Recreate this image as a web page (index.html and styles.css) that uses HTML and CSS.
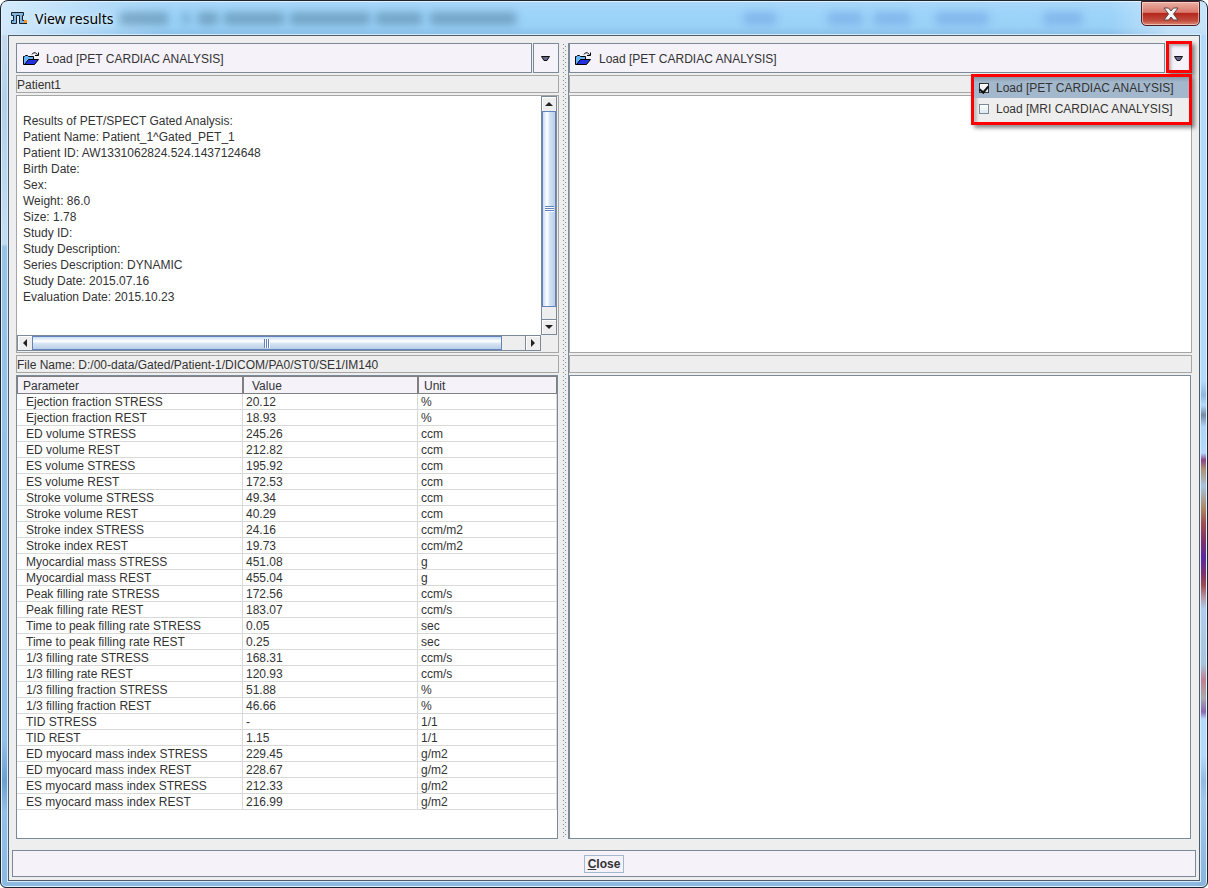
FILE: index.html
```html
<!DOCTYPE html>
<html lang="en">
<head>
<meta charset="utf-8">
<title>View results</title>
<link rel="stylesheet" href="styles.css">
</head>
<body>
<div class="window">
  <header class="titlebar">
    <svg class="app-icon" width="17" height="13" viewBox="0 0 17 13" aria-hidden="true"><path d="M.5.5h12v3h-1v5h2v3h-5v-8h-3v8h-5v-3h2v-5h-2z" fill="#7fb4dc" stroke="#14202c"/><path d="M13 11.500h3" stroke="#14202c"/><path d="M13 8h3v3h-3z" fill="#ff9320"/></svg>
    <h1 class="title">View results</h1>
    <div class="ghosts" aria-hidden="true">
      <i class="ghost g1"></i><i class="ghost g2"></i><i class="ghost g3"></i><i class="ghost g4"></i><i class="ghost g5"></i><i class="ghost g6"></i><i class="ghost g7"></i><i class="ghost b1"></i><i class="ghost b2"></i><i class="ghost b3"></i><i class="ghost b4"></i><i class="ghost b5"></i>
    </div>
    <button class="window-close" aria-label="Close window"><svg width="16" height="14" viewBox="0 0 16 14"><path d="M1 1h4.500L8 4l2.500-3H15l-4.500 6 4.500 6h-4.500L8 10l-2.500 3H1l4.500-6z" fill="#f4f4f4" stroke="#5c4548"/></svg></button>
  </header>
  <main class="client">
    <div class="panes">
      <section class="pane">
        <div class="toolbar">
          <button class="load"><svg width="17" height="14" viewBox="0 0 17 14" aria-hidden="true"><path d="M.5 12.500v-8h1l1-1h2l1 1h5v4h-5l-3 4z" fill="#64b4ff" stroke="#000"/><path d="M1.500 12.500l4-5h10l-4 5z" fill="#2430e0" stroke="#000"/><path d="M9 2.500 10.500.8h2l2 2M15.500.5v3H12" fill="none" stroke="#000"/></svg>Load [PET CARDIAC ANALYSIS]</button>
          <button class="drop" aria-label="Choose analysis"><svg width="10" height="6" viewBox="0 0 10 6"><path d="M.5.5h8L6 4.500H3z" fill="#66668c" stroke="#111"/></svg></button>
        </div>
        <div class="caption">Patient1</div>
        <div class="report">
          <div class="report-text">
            <p>Results of PET/SPECT Gated Analysis:</p>
            <p>Patient Name: Patient_1^Gated_PET_1</p>
            <p>Patient ID: AW1331062824.524.1437124648</p>
            <p>Birth Date:</p>
            <p>Sex:</p>
            <p>Weight: 86.0</p>
            <p>Size: 1.78</p>
            <p>Study ID:</p>
            <p>Study Description:</p>
            <p>Series Description: DYNAMIC</p>
            <p>Study Date: 2015.07.16</p>
            <p>Evaluation Date: 2015.10.23</p>
          </div>
          <div class="vbar">
            <button class="arrow" aria-label="Scroll up"><svg width="8" height="4"><path d="M4 0 8 4H0z" fill="#222"/></svg></button>
            <div class="thumb"><span class="grip"></span></div>
            <div class="track"></div>
            <button class="arrow" aria-label="Scroll down"><svg width="8" height="4"><path d="M0 0h8L4 4z" fill="#222"/></svg></button>
          </div>
          <div class="hbar">
            <button class="arrow" aria-label="Scroll left"><svg width="4" height="8"><path d="M4 0v8L0 4z" fill="#222"/></svg></button>
            <div class="thumb"><span class="grip"></span></div>
            <div class="track"></div>
            <button class="arrow" aria-label="Scroll right"><svg width="4" height="8"><path d="M0 0v8l4-4z" fill="#222"/></svg></button>
          </div>
        </div>
        <div class="caption">File Name: D:/00-data/Gated/Patient-1/DICOM/PA0/ST0/SE1/IM140</div>
        <div class="grid">
          <table class="results">
            <thead><tr><th class="c1">Parameter</th><th class="c2">Value</th><th class="c3">Unit</th></tr></thead>
            <tbody>
              <tr><td>Ejection fraction STRESS</td><td>20.12</td><td>%</td></tr>
              <tr><td>Ejection fraction REST</td><td>18.93</td><td>%</td></tr>
              <tr><td>ED volume STRESS</td><td>245.26</td><td>ccm</td></tr>
              <tr><td>ED volume REST</td><td>212.82</td><td>ccm</td></tr>
              <tr><td>ES volume STRESS</td><td>195.92</td><td>ccm</td></tr>
              <tr><td>ES volume REST</td><td>172.53</td><td>ccm</td></tr>
              <tr><td>Stroke volume STRESS</td><td>49.34</td><td>ccm</td></tr>
              <tr><td>Stroke volume REST</td><td>40.29</td><td>ccm</td></tr>
              <tr><td>Stroke index STRESS</td><td>24.16</td><td>ccm/m2</td></tr>
              <tr><td>Stroke index REST</td><td>19.73</td><td>ccm/m2</td></tr>
              <tr><td>Myocardial mass STRESS</td><td>451.08</td><td>g</td></tr>
              <tr><td>Myocardial mass REST</td><td>455.04</td><td>g</td></tr>
              <tr><td>Peak filling rate STRESS</td><td>172.56</td><td>ccm/s</td></tr>
              <tr><td>Peak filling rate REST</td><td>183.07</td><td>ccm/s</td></tr>
              <tr><td>Time to peak filling rate STRESS</td><td>0.05</td><td>sec</td></tr>
              <tr><td>Time to peak filling rate REST</td><td>0.25</td><td>sec</td></tr>
              <tr><td>1/3 filling rate STRESS</td><td>168.31</td><td>ccm/s</td></tr>
              <tr><td>1/3 filling rate REST</td><td>120.93</td><td>ccm/s</td></tr>
              <tr><td>1/3 filling fraction STRESS</td><td>51.88</td><td>%</td></tr>
              <tr><td>1/3 filling fraction REST</td><td>46.66</td><td>%</td></tr>
              <tr><td>TID STRESS</td><td>-</td><td>1/1</td></tr>
              <tr><td>TID REST</td><td>1.15</td><td>1/1</td></tr>
              <tr><td>ED myocard mass index STRESS</td><td>229.45</td><td>g/m2</td></tr>
              <tr><td>ED myocard mass index REST</td><td>228.67</td><td>g/m2</td></tr>
              <tr><td>ES myocard mass index STRESS</td><td>212.33</td><td>g/m2</td></tr>
              <tr><td>ES myocard mass index REST</td><td>216.99</td><td>g/m2</td></tr>
            </tbody>
          </table>
        </div>
      </section>
      <div class="splitter"></div>
      <section class="pane pane-right">
        <div class="toolbar">
          <button class="load"><svg width="17" height="14" viewBox="0 0 17 14" aria-hidden="true"><path d="M.5 12.500v-8h1l1-1h2l1 1h5v4h-5l-3 4z" fill="#64b4ff" stroke="#000"/><path d="M1.500 12.500l4-5h10l-4 5z" fill="#2430e0" stroke="#000"/><path d="M9 2.500 10.500.8h2l2 2M15.500.5v3H12" fill="none" stroke="#000"/></svg>Load [PET CARDIAC ANALYSIS]</button>
          <button class="drop drop-marked" aria-label="Choose analysis"><svg width="10" height="6" viewBox="0 0 10 6"><path d="M.5.5h8L6 4.500H3z" fill="#66668c" stroke="#111"/></svg></button>
          <div class="menu">
            <label class="item selected"><input type="checkbox" checked>Load [PET CARDIAC ANALYSIS]</label>
            <label class="item"><input type="checkbox">Load [MRI CARDIAC ANALYSIS]</label>
          </div>
        </div>
        <div class="caption"></div>
        <div class="report"></div>
        <div class="caption"></div>
        <div class="grid"></div>
      </section>
    </div>
    <footer class="bottom"><button class="close"><u>C</u>lose</button></footer>
  </main>
</div>
</body>
</html>
```
FILE: styles.css
```css
* { box-sizing: border-box; }
body { margin: 0; background: #fff; font: 12px/16px "Liberation Sans", Arial, sans-serif; color: #333; }
button { font: inherit; color: inherit; margin: 0; padding: 0; border: 0; border-radius: 0; background: none; }
svg { display: block; flex: none; }
p, h1 { margin: 0; }

.window {
  display: flex; flex-direction: column; min-height: 100vh; padding: 0 7px 6px; position: relative;
  border: 1px solid #1c2430; border-radius: 8px 8px 6px 6px; overflow: hidden;
  background:
    linear-gradient(#b5d9fb 0, #b5d9fb 380px, #8fb8dc 394px, #b5d9fb 404px, #748ca4 414px, #b0d4f6 426px, #b5d9fb 452px, #8b4585 459px, #b09070 468px, #a9c3da 485px, #ad8560 508px, #a04a50 523px, #80306a 541px, #5c28a0 557px, #80306a 573px, #a04a50 584px, #b89aa8 597px, #b0cdeb 608px, #a9c3da 663px, #c08090 679px, #aaaaaa 697px, #8a68b0 711px, #b5d9fb 718px, #b5d9fb 755px, #92bbe2 780px, #a2c8ec 800px, #8ab4dc 100%) right 0 / 8px 100% no-repeat,
    linear-gradient(#cfe0ee 0, #b4d0ea 100px, #c3dcf2 230px, #c3dcf2 243px, #98c2e6 246px, #94bfe6 740px, #6ba0d2 780px, #94bfe6 810px, #8db9e0) left 0 / 8px 100% no-repeat,
    #8db9e0;
  box-shadow: inset 0 0 0 1px #e0f2ff;
}
.titlebar {
  display: flex; align-items: center; height: 33px; margin: 1px -6px 0; padding-left: 9px; position: relative;
  background:
    linear-gradient(90deg, rgba(225,240,252,.8), rgba(190,224,248,.5) 9%, transparent 14%, transparent 92%, rgba(215,235,250,.7) 97%),
    linear-gradient(#a9d7fa, #9bd3f9 40%, #98d0f6 75%, #8bbfea);
}
.app-icon { position: relative; z-index: 1; }
.title { margin-left: 7px; font: 400 14px/18px "Noto Sans", sans-serif; color: #000; position: relative; z-index: 1; text-shadow: 0 0 6px #fff; }
.ghosts { position: absolute; inset: 0; overflow: hidden; }
.ghost { position: absolute; top: 10px; height: 13px; background: #4e7896; opacity: .5; filter: blur(4px); }
.g1 { left: 118px; width: 48px; }
.g2 { left: 180px; width: 8px; opacity: .35; }
.g3 { left: 196px; width: 20px; }
.g4 { left: 222px; width: 60px; }
.g5 { left: 288px; width: 80px; }
.g6 { left: 374px; width: 46px; }
.g7 { left: 428px; width: 86px; }
.ghost.b1, .ghost.b2, .ghost.b3, .ghost.b4, .ghost.b5 { background: #6c9ee0; }
.b1 { left: 742px; width: 32px; }
.b2 { left: 826px; width: 34px; }
.b3 { left: 872px; width: 36px; }
.b4 { left: 934px; width: 52px; }
.b5 { left: 1042px; width: 38px; }
.window-close {
  display: grid; place-items: center; position: relative; align-self: flex-start; margin: -1px 6px 0 auto;
  width: 59px; height: 25px; border: 1px solid #4a1f24; border-radius: 0 0 5px 5px;
  background: linear-gradient(#eab0a4, #d9796c 45%, #b5271b 50%, #c04a3c 80%, #dd8a74); box-shadow: inset 0 0 0 1px rgba(255,225,215,.6);
}

.client { flex: 1; display: flex; flex-direction: column; gap: 11px; padding: 7px 3px 3px; background: #eee; border: 1px solid #4d5b6b; box-shadow: 0 0 0 1px #d5ecff; position: relative; }
.panes { flex: 1; display: grid; grid-template-columns: 543fr 9px 624fr; margin: 0 4px; }
.pane { display: grid; grid-template-rows: 30px 18px 258fr 18px 464fr; gap: 2px; min-width: 0; }
.pane-right { border-left: 1px solid #7a8a99; }
.toolbar { display: flex; gap: 1px; position: relative; }
.load { flex: 1; display: flex; align-items: center; gap: 6px; padding: 2px 0 0 6px; background: #f5f2fa; border: 1px solid #7a8a99; text-align: left; }
.pane-right .load { padding-left: 5px; gap: 7px; }
.drop { width: 26px; display: grid; place-items: center; padding-top: 2px; background: #f5f2fa; border: 1px solid #7a8a99; }
.drop-marked { margin-top: -2px; padding-top: 3px; border: 3px solid #f00; box-shadow: 3px 3px 4px rgba(0,0,0,.45), inset 2px 2px 3px rgba(0,0,0,.3); }
.caption { border: 1px solid #a6a6a6; background: #eee; line-height: 18px; white-space: nowrap; overflow: hidden; }
.report { display: grid; grid-template: "text vbar" 1fr "hbar corner" 17px / 1fr 17px; border: 1px solid #a6a6a6; background: #eee; min-height: 0; }
.pane-right .report { background: #fff; }
.report-text { grid-area: text; background: #fff; padding: 17px 6px 0; overflow: hidden; white-space: nowrap; }
.vbar { grid-area: vbar; display: flex; flex-direction: column; border: 1px solid #7a8a99; margin-right: 1px; }
.hbar { grid-area: hbar; display: flex; border: 1px solid #7a8a99; margin-bottom: 1px; }
.arrow { flex: none; display: grid; place-items: center; width: 14px; height: 14px; box-shadow: inset 1px 1px #fff; }
.arrow:last-child { outline: 1px solid #7a8a99; }
.thumb { display: grid; place-items: center; border: 1px solid #6382bf; }
.vbar .thumb { flex: 194; background: linear-gradient(90deg, #c9dcf0, #fff 35%, #d5e4f4 55%, #b8cfe5); }
.hbar .thumb { flex: 469; background: linear-gradient(#c9dcf0, #fff 35%, #d5e4f4 55%, #b8cfe5); }
.vbar .track { flex: 13; }
.hbar .track { flex: 24; }
.grip { width: 9px; height: 6px; background: repeating-linear-gradient(#6382bf 0 1px, #fff 1px 2px); }
.hbar .grip { width: 6px; height: 9px; background: repeating-linear-gradient(90deg, #6382bf 0 1px, #fff 1px 2px); }
.grid { border: 1px solid #7a8a99; background: #fff; margin-right: 1px; min-height: 0; }

.results { width: 100%; border-collapse: separate; border-spacing: 0; table-layout: fixed; }
.results th { height: 18px; padding: 2px 0 0 5px; text-align: left; font-weight: 400; line-height: 14px; background: #f5f2fa; border: 1px solid #808080; }
.c1 { width: 226px; }
.c2 { width: 175px; }
.results .c2 { padding-left: 8px; }
.results td { height: 16px; padding: 2px 3px 0; line-height: 13px; border: 1px solid #d9d9d9; border-width: 0 1px 1px 0; white-space: nowrap; }
.results td:first-child { padding-left: 9px; }

.splitter {
  margin: 1px 1px 1px 4px;
  background-image: linear-gradient(#7a8a99 1px, transparent 1px), linear-gradient(#7a8a99 1px, transparent 1px);
  background-size: 1px 4px;
  background-position: 0 0, 2px 2px;
  background-repeat: repeat-y;
}

.menu { position: absolute; top: 31px; right: 0; width: 221px; padding-bottom: 3px; border: 3px solid #f00; background: #eee; box-shadow: 3px 3px 4px rgba(0,0,0,.45), inset 3px 3px 3px rgba(0,0,0,.2); z-index: 2; }
.item { display: flex; align-items: center; height: 21px; padding: 1px 0 0 5px; gap: 7px; white-space: nowrap; }
.selected { background: linear-gradient(#8798a8, #a3b8cc 5px); }
.item input { appearance: none; display: grid; place-items: center; width: 10px; height: 10px; margin: 0; border: 1px solid #7a8a99; background: linear-gradient(#fff, #dce8f3); }
.item input:checked { border-color: #333; }
.item input:checked::after { content: ""; width: 4px; height: 7px; border: solid #111; border-width: 0 2px 2px 0; transform: rotate(40deg); }

.bottom { display: grid; place-items: center; height: 27px; border: 1px solid #7a8a99; background: #f5f2fa; }
.close { height: 18px; padding: 0 3px; border: 1px solid #a3b8cc; font-weight: 700; }
```
